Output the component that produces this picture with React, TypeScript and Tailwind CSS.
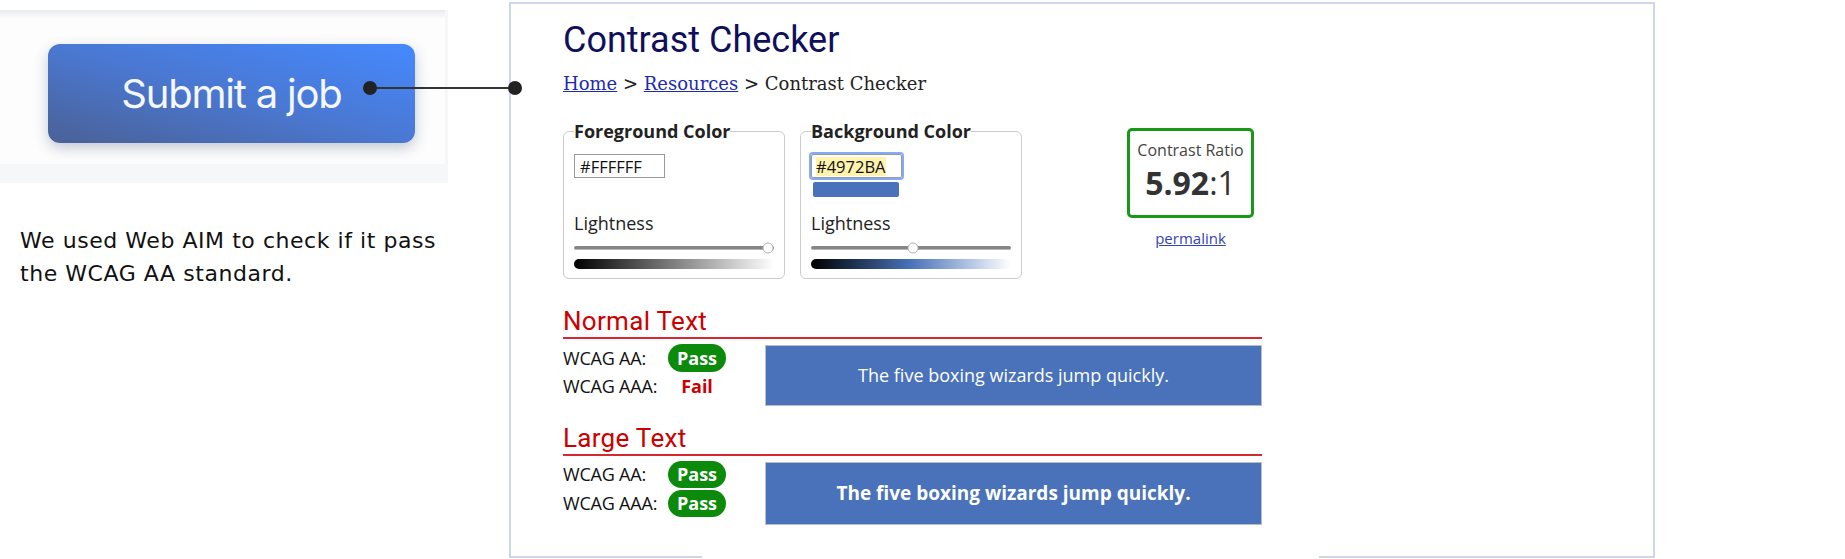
import React from "react";

const FRAME = "border-[#cfd6ec]";

interface FieldProps {
  title: string;
  value: string;
  focused?: boolean;
  swatch: string;
  thumb: number;
  bar: string;
}

function ColorField({ title, value, focused, swatch, thumb, bar }: FieldProps) {
  return (
    <fieldset className="w-[222px] border border-[#cccccc] rounded-[6px] pl-[10px] pr-[10px] pt-[13px] pb-[9px]">
      <legend className="text-[18px] leading-[20px] font-bold text-[#222]">{title}</legend>
      <div
        className={
          focused
            ? "w-[91px] h-[24px] border border-[#9a9a9a] rounded-[2px] ring-2 ring-[#86abf5] flex items-center pl-[4px] text-[16.5px] text-[#111]"
            : "w-[91px] h-[24px] border border-[#9a9a9a] flex items-center pl-[5px] text-[16.5px] text-[#111]"
        }
      >
        <span className={focused ? "bg-[#fff3ae] leading-[19px]" : "leading-[19px]"}>{value}</span>
      </div>
      <div className={`mt-[4px] ml-[2px] w-[86px] h-[15px] rounded-[2px] ${swatch}`} />
      <div className="mt-[16px] text-[18px] leading-[20px] text-[#222]">Lightness</div>
      <div className="relative mt-[13px] h-[4px] rounded-full bg-[#858585] border-b border-[#b5b5b5]">
        <div
          className="absolute top-1/2 w-[11px] h-[11px] -translate-x-1/2 -translate-y-1/2 rounded-full bg-white border border-[#b0b0b0]"
          style={{ left: `${thumb}%` }}
        />
      </div>
      <div className={`mt-[9px] h-[10px] rounded-l-[5px] ${bar}`} />
    </fieldset>
  );
}

function Pill() {
  return (
    <span className="w-[58px] h-full rounded-full bg-[#0b8a0b] text-white font-bold flex items-center justify-center">
      Pass
    </span>
  );
}

function ResultRow({ label, children, h }: { label: string; children: React.ReactNode; h: string }) {
  return (
    <div className={`flex items-center ${h}`}>
      <span className="w-[105px] text-[#111] tracking-[-0.2px]">{label}</span>
      <div className="w-[58px] h-full flex items-center justify-center">{children}</div>
    </div>
  );
}

export default function App() {
  return (
    <div className="relative w-[1845px] h-[559px] bg-white flex overflow-hidden font-['Open_Sans',sans-serif]">
      {/* left: the button and the note */}
      <div className="w-[448px] flex flex-col">
        <div className="mt-[10px] h-[173px] bg-[#f6f7f9] pr-[3px] pb-[19px]">
          <div className="h-full bg-[linear-gradient(to_bottom,#e9eaee,#fdfdfd_9px)] pl-[48px] pt-[34px]">
            <button className="w-[367px] h-[99px] rounded-[12px] bg-[linear-gradient(to_top_right,#4a6196,#4a78d2_50%,#4589ff)] shadow-[0_5px_14px_rgba(40,60,100,0.28)] text-[#f5f7ff] font-['Inter',sans-serif] text-[40px] tracking-[-1.2px] flex items-center justify-center">
              Submit a job
            </button>
          </div>
        </div>
        <p className="mt-[41px] pl-[20px] font-['DejaVu_Sans',sans-serif] text-[22px] leading-[33px] tracking-[0.55px] text-[#111]">
          We used Web AIM to check if it pass
          <br />
          the WCAG AA standard.
        </p>
      </div>

      {/* screenshot frame */}
      <div className={`ml-[61px] mt-[2px] w-[1146px] h-[556px] border-t-2 border-x-2 ${FRAME} flex flex-col`}>
        <div className="flex-1 pl-[52px] pt-[16px]">
          <h1 className="font-['Roboto',sans-serif] text-[36px] leading-[40px] text-[#0f0f5c]">Contrast Checker</h1>
          <div className="mt-[12px] font-['DejaVu_Serif',serif] text-[18px] leading-[24px] text-[#222]">
            <a className="text-[#1c2bb0] underline">Home</a> &gt; <a className="text-[#1c2bb0] underline">Resources</a> &gt; Contrast Checker
          </div>

          <div className="mt-[25px] flex items-start">
            <ColorField
              title="Foreground Color"
              value="#FFFFFF"
              swatch="bg-white"
              thumb={97}
              bar="bg-[linear-gradient(to_right,#000,#fff)]"
            />
            <div className="ml-[15px]">
              <ColorField
                title="Background Color"
                value="#4972BA"
                focused
                swatch="bg-[#4972ba]"
                thumb={50.8}
                bar="bg-[linear-gradient(to_right,#000,#4972ba_50%,#fff)]"
              />
            </div>
            <div className="ml-[105px] mt-[7px] flex flex-col items-center">
              <div className="w-[127px] h-[90px] border-[3px] border-[#179917] rounded-[5px] flex flex-col items-center pt-[9px]">
                <span className="text-[16px] leading-[20px] text-[#444]">Contrast Ratio</span>
                <span className="mt-[5px] text-[32px] leading-[36px] text-[#333]">
                  <b>5.92</b>:1
                </span>
              </div>
              <a className="mt-[11px] text-[15px] leading-[18px] text-[#3344bb] underline">permalink</a>
            </div>
          </div>

          {/* normal text */}
          <div className="mt-[27px] w-[699px] text-[18px]">
            <h2 className="font-['Roboto',sans-serif] text-[26px] leading-[30px] tracking-[0.3px] text-[#cc0000] border-b-2 border-[#d8282f] pb-[1px]">
              Normal Text
            </h2>
            <div className="mt-[5px] flex items-start">
              <div className="w-[202px] flex flex-col">
                <ResultRow label="WCAG AA:" h="h-[28px]">
                  <Pill />
                </ResultRow>
                <ResultRow label="WCAG AAA:" h="h-[28px]">
                  <span className="font-bold text-[#cc0000]">Fail</span>
                </ResultRow>
              </div>
              <div className="mt-[1px] w-[497px] h-[61px] bg-[#4972ba] border border-[#b9bdc9] flex items-center justify-center text-white text-[18px]">
                The five boxing wizards jump quickly.
              </div>
            </div>

            {/* large text */}
            <h2 className="mt-[17px] font-['Roboto',sans-serif] text-[26px] leading-[30px] tracking-[0.3px] text-[#cc0000] border-b-2 border-[#d8282f] pb-[1px]">
              Large Text
            </h2>
            <div className="mt-[5px] flex items-start">
              <div className="w-[202px] flex flex-col gap-[2px]">
                <ResultRow label="WCAG AA:" h="h-[27px]">
                  <Pill />
                </ResultRow>
                <ResultRow label="WCAG AAA:" h="h-[27px]">
                  <Pill />
                </ResultRow>
              </div>
              <div className="mt-[1px] w-[497px] h-[63px] bg-[#4972ba] border border-[#b9bdc9] flex items-center justify-center text-white text-[19px] font-bold">
                The five boxing wizards jump quickly.
              </div>
            </div>
          </div>
        </div>
        <div className="flex h-[2px]">
          <div className="w-[191px] bg-[#cfd6ec]" />
          <div className="flex-1" />
          <div className="w-[334px] bg-[#cfd6ec]" />
        </div>
      </div>

      {/* connector from the button to the page */}
      <svg className="absolute left-0 top-0 pointer-events-none" width="540" height="120">
        <line x1="370" y1="88" x2="515" y2="88" stroke="#333" strokeWidth="2" />
        <circle cx="370" cy="88" r="7" fill="#222" />
        <circle cx="515" cy="88" r="7" fill="#222" />
      </svg>
    </div>
  );
}
